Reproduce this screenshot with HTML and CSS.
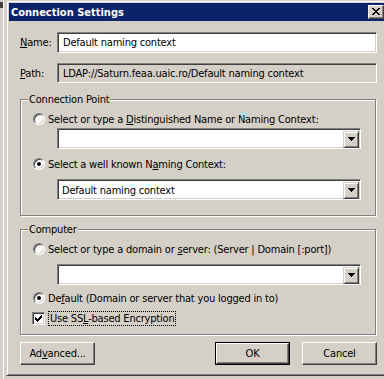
FILE: index.html
```html
<!DOCTYPE html>
<html>
<head>
<meta charset="utf-8">
<title>Connection Settings</title>
<link rel="stylesheet" href="styles.css">
</head>
<body>
<div class="desk">
  <div class="behind"><span class="behind-mark"></span></div>
  <div class="window">
    <div class="titlebar">
      <span class="title">Connection Settings</span>
      <span class="close-btn">
        <svg width="8" height="7" viewBox="0 0 8 7" shape-rendering="crispEdges">
          <rect x="0" y="0" width="2" height="1"/><rect x="6" y="0" width="2" height="1"/>
          <rect x="1" y="1" width="2" height="1"/><rect x="5" y="1" width="2" height="1"/>
          <rect x="2" y="2" width="4" height="1"/>
          <rect x="3" y="3" width="2" height="1"/>
          <rect x="2" y="4" width="4" height="1"/>
          <rect x="1" y="5" width="2" height="1"/><rect x="5" y="5" width="2" height="1"/>
          <rect x="0" y="6" width="2" height="1"/><rect x="6" y="6" width="2" height="1"/>
        </svg>
      </span>
    </div>
    <div class="client">
      <div class="field-row name-row">
        <span class="field-label"><u>N</u>ame:</span>
        <div class="edit">Default naming context</div>
      </div>
      <div class="field-row path-row">
        <span class="field-label"><u>P</u>ath:</span>
        <div class="edit readonly">LDAP://Saturn.feaa.uaic.ro/Default naming context</div>
      </div>

      <div class="group group-cp">
        <span class="legend">Connection Point</span>
        <div class="option opt-first">
          <span class="radio"></span>
          <span class="opt-text">Select or type a <u>D</u>istinguished Name or Naming Context:</span>
        </div>
        <div class="combo combo-a">
          <span class="combo-text"></span>
          <span class="drop-btn"><svg width="7" height="4" viewBox="0 0 7 4" shape-rendering="crispEdges"><rect x="0" y="0" width="7" height="1"/><rect x="1" y="1" width="5" height="1"/><rect x="2" y="2" width="3" height="1"/><rect x="3" y="3" width="1" height="1"/></svg></span>
        </div>
        <div class="option opt-second">
          <span class="radio checked"></span>
          <span class="opt-text">Select a well known N<u>a</u>ming Context:</span>
        </div>
        <div class="combo combo-b">
          <span class="combo-text">Default naming context</span>
          <span class="drop-btn"><svg width="7" height="4" viewBox="0 0 7 4" shape-rendering="crispEdges"><rect x="0" y="0" width="7" height="1"/><rect x="1" y="1" width="5" height="1"/><rect x="2" y="2" width="3" height="1"/><rect x="3" y="3" width="1" height="1"/></svg></span>
        </div>
      </div>

      <div class="group group-pc">
        <span class="legend">Computer</span>
        <div class="option opt-first">
          <span class="radio"></span>
          <span class="opt-text">Select or type a domain or <u>s</u>erver: (Server | Domain [:port])</span>
        </div>
        <div class="combo combo-c">
          <span class="combo-text"></span>
          <span class="drop-btn"><svg width="7" height="4" viewBox="0 0 7 4" shape-rendering="crispEdges"><rect x="0" y="0" width="7" height="1"/><rect x="1" y="1" width="5" height="1"/><rect x="2" y="2" width="3" height="1"/><rect x="3" y="3" width="1" height="1"/></svg></span>
        </div>
        <div class="option opt-third">
          <span class="radio checked"></span>
          <span class="opt-text">De<u>f</u>ault (Domain or server that you logged in to)</span>
        </div>
        <div class="check-row">
          <span class="checkbox">
            <svg width="7" height="7" viewBox="0 0 7 7" shape-rendering="crispEdges">
              <rect x="6" y="0" width="1" height="1"/>
              <rect x="5" y="1" width="2" height="1"/>
              <rect x="0" y="2" width="1" height="1"/><rect x="4" y="2" width="3" height="1"/>
              <rect x="0" y="3" width="2" height="1"/><rect x="3" y="3" width="3" height="1"/>
              <rect x="0" y="4" width="5" height="1"/>
              <rect x="1" y="5" width="3" height="1"/>
              <rect x="2" y="6" width="1" height="1"/>
            </svg>
          </span>
          <span class="focus-text">Use SS<u>L</u>-based Encryption</span>
        </div>
      </div>

      <div class="buttons">
        <span class="btn">Ad<u>v</u>anced...</span>
        <span class="spacer"></span>
        <span class="btn default"><span class="btn-inner">OK</span></span>
        <span class="btn">Cancel</span>
      </div>
    </div>
  </div>
</div>
</body>
</html>
```
FILE: styles.css
```css
* { box-sizing: border-box; }

html, body {
  margin: 0;
  padding: 0;
  background: #d4d0c8;
}

body {
  font-family: "DejaVu Sans", sans-serif;
  font-stretch: condensed;
  font-size: 11px;
  line-height: 13px;
  letter-spacing: -0.2px;
  color: #000;
}

u { text-decoration: underline; text-underline-offset: 1px; }

.desk {
  display: flex;
  width: 384px;
  height: 379px;
  overflow: hidden;
  background: #d4d0c8;
}

.behind {
  flex: none;
  width: 6px;
  height: 379px;
  padding-top: 2px;
  background: linear-gradient(to right, #d4d0c8 0 3px, #ffffff 3px 4px, #d4d0c8 4px 6px);
}

.behind-mark {
  display: block;
  width: 3px;
  height: 6px;
  background: #404040;
}

.window {
  flex: none;
  width: 383px;
  height: 376px;
  border: 1px solid;
  border-color: #d4d0c8 #404040 #404040 #d4d0c8;
  box-shadow: inset 1px 1px #ffffff, inset -1px -1px #808080;
  padding: 2px;
  display: flex;
  flex-direction: column;
  background: #d4d0c8;
}

.titlebar {
  flex: none;
  height: 18px;
  background: #0a246a;
  display: flex;
  align-items: center;
  padding: 0 2px 0 2px;
}

.title {
  flex: 1;
  color: #fff;
  font-weight: bold;
  font-size: 11px;
  letter-spacing: 0;
  white-space: nowrap;
}

.close-btn {
  flex: none;
  width: 16px;
  height: 14px;
  background: #d4d0c8;
  border: 1px solid;
  border-color: #ffffff #404040 #404040 #ffffff;
  box-shadow: inset -1px -1px #808080;
  display: flex;
  align-items: center;
  justify-content: center;
  padding: 0 1px 1px 0;
}

.client {
  flex: 1;
  display: flex;
  flex-direction: column;
  padding: 0 9px 0 11px;
}

.field-row {
  display: flex;
  align-items: center;
}

.name-row { margin-top: 11px; height: 21px; }
.path-row { margin-top: 10px; height: 20px; }

.field-label {
  flex: none;
  width: 37px;
  white-space: nowrap;
}

.edit {
  flex: 1;
  height: 100%;
  border: 1px solid;
  border-color: #808080 #ffffff #ffffff #808080;
  box-shadow: inset 1px 1px #404040, inset -1px -1px #d4d0c8;
  background: #fff;
  padding: 0 3px 0 5px;
  display: flex;
  align-items: center;
  white-space: nowrap;
  overflow: hidden;
}

.edit.readonly { background: #d4d0c8; }

.group {
  border: 1px solid #808080;
  box-shadow: 1px 1px #ffffff, inset 1px 1px #ffffff;
  margin-right: 1px;
  display: flex;
  flex-direction: column;
}

.group-cp { margin-top: 16px; padding-bottom: 15px; }
.group-pc { margin-top: 13px; padding-bottom: 8px; }

.legend {
  align-self: flex-start;
  margin: -7px 0 0 7px;
  padding: 0 1px;
  height: 13px;
  background: #d4d0c8;
  white-space: nowrap;
}

.option {
  display: flex;
  align-items: center;
  height: 12px;
  padding-left: 12px;
  white-space: nowrap;
}

.group-cp .opt-first { margin-top: 7px; }
.group-cp .opt-second { margin-top: 9px; }
.group-pc .opt-first { margin-top: 7px; }
.group-pc .opt-third { margin-top: 7px; }

.radio {
  flex: none;
  width: 12px;
  height: 12px;
  border-radius: 50%;
  border: 1px solid;
  border-color: #808080 #ffffff #ffffff #808080;
  box-shadow: inset 1px 1px #404040, inset -1px -1px #d4d0c8;
  background: #fff;
  display: flex;
  align-items: center;
  justify-content: center;
}

.radio.checked::after {
  content: "";
  width: 4px;
  height: 4px;
  border-radius: 50%;
  background: #000;
}

.opt-text { margin-left: 3px; }

.combo {
  height: 21px;
  margin-left: 36px;
  width: 304px;
  border: 1px solid;
  border-color: #808080 #ffffff #ffffff #808080;
  box-shadow: inset 1px 1px #404040, inset -1px -1px #d4d0c8;
  background: #fff;
  padding: 2px 1px 1px 2px;
  display: flex;
}

.combo-a { margin-top: 3px; }
.combo-b { margin-top: 9px; }
.combo-c { margin-top: 9px; }

.combo-text {
  flex: 1;
  display: flex;
  align-items: center;
  padding-left: 2px;
  white-space: nowrap;
}

.drop-btn {
  flex: none;
  width: 16px;
  height: 17px;
  background: #d4d0c8;
  border: 1px solid;
  border-color: #d4d0c8 #404040 #404040 #d4d0c8;
  box-shadow: inset 1px 1px #ffffff, inset -1px -1px #808080;
  display: flex;
  align-items: center;
  justify-content: center;
  padding-bottom: 1px;
}

.check-row {
  display: flex;
  align-items: center;
  height: 15px;
  margin-top: 7px;
  padding-left: 11px;
}

.checkbox {
  flex: none;
  width: 13px;
  height: 13px;
  border: 1px solid;
  border-color: #808080 #ffffff #ffffff #808080;
  box-shadow: inset 1px 1px #404040, inset -1px -1px #d4d0c8;
  background: #fff;
  display: flex;
  align-items: center;
  justify-content: center;
}

.focus-text {
  margin-left: 3px;
  height: 15px;
  border: 1px dotted #000;
  padding: 0 1px;
  white-space: nowrap;
}

.buttons {
  display: flex;
  margin-top: 7px;
  height: 23px;
}

.spacer { flex: 1; }

.btn {
  flex: none;
  width: 75px;
  height: 23px;
  border: 1px solid;
  border-color: #ffffff #404040 #404040 #ffffff;
  box-shadow: inset -1px -1px #808080;
  background: #d4d0c8;
  display: flex;
  align-items: center;
  justify-content: center;
  white-space: nowrap;
  margin-left: 12px;
}

.btn:first-child { margin-left: 0; }

.btn.default {
  border: 1px solid #000;
  padding: 0;
}

.btn-inner {
  width: 100%;
  height: 100%;
  border: 1px solid;
  border-color: #ffffff #404040 #404040 #ffffff;
  box-shadow: inset -1px -1px #808080;
  display: flex;
  align-items: center;
  justify-content: center;
}
```
